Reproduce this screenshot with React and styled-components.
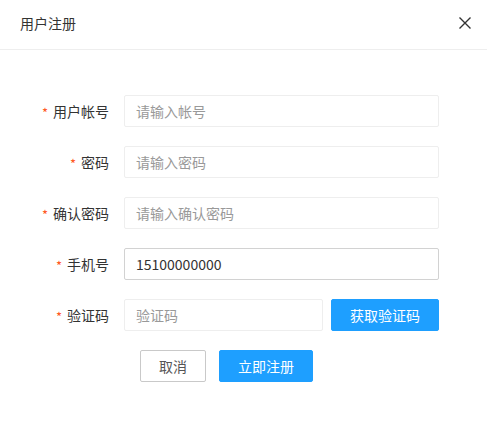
import React from "react";
import styled, { createGlobalStyle } from "styled-components";

const Global = createGlobalStyle`
  html, body { margin: 0; padding: 0; background: #fff; }
  body { font-family: "Noto Sans CJK SC", "Noto Sans", sans-serif; color: #333; }
  * { box-sizing: border-box; }
`;

const Dialog = styled.div`
  width: 487px;
  height: 441px;
  background: #fff;
`;

const Header = styled.div`
  height: 50px;
  display: flex;
  align-items: center;
  justify-content: space-between;
  padding: 0 16px 4px 20px;
  border-bottom: 1px solid #eee;
`;

const Title = styled.div`
  font-size: 14px;
  color: #333;
  line-height: 20px;
`;

const Close = styled.button`
  border: 0;
  background: none;
  padding: 0;
  width: 12px;
  height: 12px;
  display: flex;
  cursor: pointer;
`;

const Form = styled.div`
  padding-top: 45px;
  display: grid;
  grid-template-columns: 109px 315px;
  column-gap: 15px;
  row-gap: 19px;
  align-items: center;
`;

const Label = styled.label`
  display: flex;
  justify-content: flex-end;
  align-items: center;
  font-size: 14px;
  color: #333;
  line-height: 32px;
`;

const Star = styled.span`
  color: #ff5722;
  font-size: 13px;
  margin-right: 5px;
  position: relative;
  top: 2px;
`;

const Input = styled.input`
  width: 100%;
  height: 32px;
  border: 1px solid ${(p) => (p.$active ? "#d2d2d2" : "#eee")};
  border-radius: 2px;
  padding: 0 11px;
  font-family: inherit;
  font-size: 14px;
  color: #333;
  outline: none;
  background: #fff;
  &::placeholder { color: #999; }
`;

const CodeRow = styled.div`
  display: flex;
  gap: 8px;
`;

const Button = styled.button`
  height: 32px;
  border-radius: 2px;
  font-family: inherit;
  font-size: 14px;
  cursor: pointer;
  padding: 0;
  border: 1px solid ${(p) => (p.$primary ? "#1e9fff" : "#c9c9c9")};
  background: ${(p) => (p.$primary ? "#1e9fff" : "#fff")};
  color: ${(p) => (p.$primary ? "#fff" : "#555")};
  width: ${(p) => p.$w}px;
  flex: none;
`;

const Actions = styled.div`
  grid-column: 2;
  display: flex;
  gap: 13px;
  padding-left: 16px;
`;

const fields = [
  { label: "用户帐号", placeholder: "请输入帐号" },
  { label: "密码", placeholder: "请输入密码" },
  { label: "确认密码", placeholder: "请输入确认密码" },
  { label: "手机号", value: "15100000000", active: true },
];

export default function App() {
  return (
    <Dialog>
      <Global />
      <Header>
        <Title>用户注册</Title>
        <Close aria-label="关闭">
          <svg width="12" height="12" viewBox="0 0 12 12">
            <path d="M0.5 0.5L11.5 11.5M11.5 0.5L0.5 11.5" stroke="#333" strokeWidth="1.4" />
          </svg>
        </Close>
      </Header>
      <Form>
        {fields.map((f) => (
          <React.Fragment key={f.label}>
            <Label>
              <Star>*</Star>
              {f.label}
            </Label>
            <Input placeholder={f.placeholder} defaultValue={f.value} $active={f.active} />
          </React.Fragment>
        ))}
        <Label>
          <Star>*</Star>
          验证码
        </Label>
        <CodeRow>
          <Input placeholder="验证码" />
          <Button $primary $w={108}>获取验证码</Button>
        </CodeRow>
        <Actions>
          <Button $w={66}>取消</Button>
          <Button $primary $w={94}>立即注册</Button>
        </Actions>
      </Form>
    </Dialog>
  );
}
